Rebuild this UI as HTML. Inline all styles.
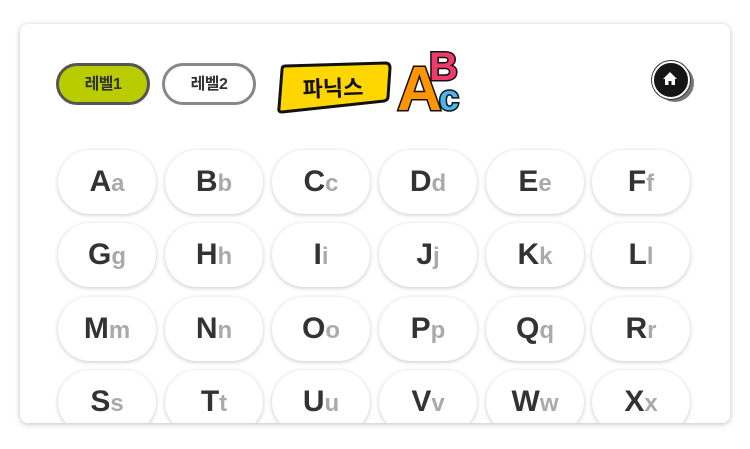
<!DOCTYPE html>
<html><head><meta charset="utf-8"><style>
body{margin:0;width:750px;height:449px;background:#fff;overflow:hidden;font-family:"Liberation Sans","Noto Sans CJK KR",sans-serif;position:relative}
.card{position:absolute;left:20px;top:24px;width:710px;height:399px;background:#fff;border-radius:8px;box-shadow:0 1px 6px rgba(0,0,0,.25);overflow:hidden}
.lv{position:absolute;top:39px;width:94px;height:42px;border-radius:21px;box-sizing:border-box;font-size:16px;font-weight:bold;color:#333;text-align:center;line-height:38px;letter-spacing:-0.5px}
.p{position:absolute;width:98px;height:64px;border-radius:32px;background:#fff;box-shadow:0 1px 4px rgba(0,0,0,.22);text-align:center;line-height:64px;font-size:30px;font-weight:bold;color:#333}
.p span{color:#aaa;font-size:24px}
</style></head><body>
<div class="card">
<div class="lv" style="left:36px;background:#b8cc00;border:3px solid #555">레벨1</div>
<div class="lv" style="left:142px;background:#fff;border:3px solid #888">레벨2</div>
<svg style="position:absolute;left:255px;top:15px" width="200" height="80" viewBox="255 15 200 80">
<path d="M265 42 L365 39 Q370 39 370 44 L368 73 Q368 76 364 77 L262 88 Q258 88 259 84 L262 46 Q262 42 265 42Z" fill="#ffd600" stroke="#111" stroke-width="3"/>
<text x="313" y="72" font-size="22" font-weight="bold" text-anchor="middle" fill="#111" font-family="Noto Sans CJK KR,sans-serif" transform="rotate(-2 313 64)">파닉스</text>
<text x="377" y="86" font-size="62" font-weight="bold" fill="#ff9500" stroke="#111" stroke-width="3" paint-order="stroke" font-family="Liberation Sans,sans-serif">A</text>
<text x="409" y="56" font-size="40" font-weight="bold" fill="#f03a6a" stroke="#111" stroke-width="3" paint-order="stroke" font-family="Liberation Sans,sans-serif">B</text>
<text x="419" y="86" font-size="36" font-weight="bold" fill="#49b6f0" stroke="#111" stroke-width="3" paint-order="stroke" font-family="Liberation Sans,sans-serif">c</text>
</svg>
<div style="position:absolute;left:636px;top:40px;width:38px;height:38px;border-radius:50%;background:#777"></div>
<div style="position:absolute;left:632px;top:37px;width:34px;height:34px;border-radius:50%;background:#151515;border:2px solid #fff;box-shadow:0 0 0 1px #333"></div>
<svg style="position:absolute;left:640px;top:45px" width="20" height="20" viewBox="0 0 20 20"><path d="M10 3 L17 10 L15 10 L15 16 L11.5 16 L11.5 12 L8.5 12 L8.5 16 L5 16 L5 10 L3 10Z" fill="#fff"/></svg>
<div class="p" style="left:38px;top:126px">A<span>a</span></div>
<div class="p" style="left:145px;top:126px">B<span>b</span></div>
<div class="p" style="left:252px;top:126px">C<span>c</span></div>
<div class="p" style="left:359px;top:126px">D<span>d</span></div>
<div class="p" style="left:466px;top:126px">E<span>e</span></div>
<div class="p" style="left:572px;top:126px">F<span>f</span></div>
<div class="p" style="left:38px;top:199px">G<span>g</span></div>
<div class="p" style="left:145px;top:199px">H<span>h</span></div>
<div class="p" style="left:252px;top:199px">I<span>i</span></div>
<div class="p" style="left:359px;top:199px">J<span>j</span></div>
<div class="p" style="left:466px;top:199px">K<span>k</span></div>
<div class="p" style="left:572px;top:199px">L<span>l</span></div>
<div class="p" style="left:38px;top:273px">M<span>m</span></div>
<div class="p" style="left:145px;top:273px">N<span>n</span></div>
<div class="p" style="left:252px;top:273px">O<span>o</span></div>
<div class="p" style="left:359px;top:273px">P<span>p</span></div>
<div class="p" style="left:466px;top:273px">Q<span>q</span></div>
<div class="p" style="left:572px;top:273px">R<span>r</span></div>
<div class="p" style="left:38px;top:346px">S<span>s</span></div>
<div class="p" style="left:145px;top:346px">T<span>t</span></div>
<div class="p" style="left:252px;top:346px">U<span>u</span></div>
<div class="p" style="left:359px;top:346px">V<span>v</span></div>
<div class="p" style="left:466px;top:346px">W<span>w</span></div>
<div class="p" style="left:572px;top:346px">X<span>x</span></div>
</div>
</body></html>
